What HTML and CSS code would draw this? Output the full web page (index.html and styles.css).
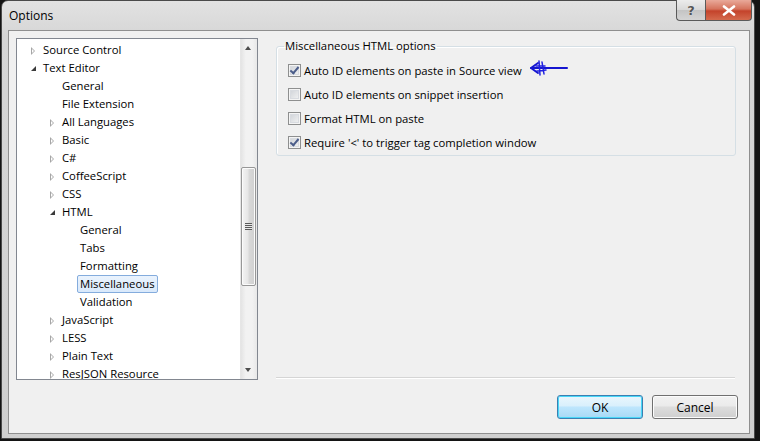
FILE: index.html
```html
<!DOCTYPE html>
<html>
<head>
<meta charset="utf-8">
<title>Options</title>
<link rel="stylesheet" href="styles.css">
</head>
<body>
<div class="window">
  <div class="titlebar">
    <span class="title">Options</span>
    <div class="caption-buttons">
      <div class="cap-btn help">?</div>
      <div class="cap-btn close">
        <svg width="14" height="11" viewBox="0 0 14 11"><path d="M2 1.5 L12 9.5 M12 1.5 L2 9.5" stroke="#fff" stroke-width="2.6" stroke-linecap="round"/></svg>
      </div>
    </div>
  </div>
  <div class="client">
    <div class="main">
      <div class="tree">
        <div class="tree-items">
          <div class="row lvl0"><span class="exp collapsed"></span><span class="label">Source Control</span></div>
          <div class="row lvl0"><span class="exp expanded"></span><span class="label">Text Editor</span></div>
          <div class="row lvl1"><span class="exp"></span><span class="label">General</span></div>
          <div class="row lvl1"><span class="exp"></span><span class="label">File Extension</span></div>
          <div class="row lvl1"><span class="exp collapsed"></span><span class="label">All Languages</span></div>
          <div class="row lvl1"><span class="exp collapsed"></span><span class="label">Basic</span></div>
          <div class="row lvl1"><span class="exp collapsed"></span><span class="label">C#</span></div>
          <div class="row lvl1"><span class="exp collapsed"></span><span class="label">CoffeeScript</span></div>
          <div class="row lvl1"><span class="exp collapsed"></span><span class="label">CSS</span></div>
          <div class="row lvl1"><span class="exp expanded"></span><span class="label">HTML</span></div>
          <div class="row lvl2"><span class="exp"></span><span class="label">General</span></div>
          <div class="row lvl2"><span class="exp"></span><span class="label">Tabs</span></div>
          <div class="row lvl2"><span class="exp"></span><span class="label">Formatting</span></div>
          <div class="row lvl2"><span class="exp"></span><span class="label selected">Miscellaneous</span></div>
          <div class="row lvl2"><span class="exp"></span><span class="label">Validation</span></div>
          <div class="row lvl1"><span class="exp collapsed"></span><span class="label">JavaScript</span></div>
          <div class="row lvl1"><span class="exp collapsed"></span><span class="label">LESS</span></div>
          <div class="row lvl1"><span class="exp collapsed"></span><span class="label">Plain Text</span></div>
          <div class="row lvl1"><span class="exp collapsed"></span><span class="label">ResJSON Resource</span></div>
        </div>
        <div class="vscroll">
          <div class="sb-arrow up"></div>
          <div class="sb-track">
            <div class="sb-thumb"><span class="grip"></span></div>
          </div>
          <div class="sb-arrow down"></div>
        </div>
      </div>
      <div class="panel">
        <fieldset class="group">
          <legend>Miscellaneous HTML options</legend>
          <div class="opt"><span class="cb checked"></span><span>Auto ID elements on paste in Source view</span></div>
          <div class="opt"><span class="cb"></span><span>Auto ID elements on snippet insertion</span></div>
          <div class="opt"><span class="cb"></span><span>Format HTML on paste</span></div>
          <div class="opt"><span class="cb checked"></span><span>Require '&lt;' to trigger tag completion window</span></div>
        </fieldset>
        <div class="separator"></div>
      </div>
    </div>
    <div class="buttons">
      <button class="btn default">OK</button>
      <button class="btn">Cancel</button>
    </div>
  </div>
  <svg class="annotation" width="44" height="20" viewBox="0 0 44 20">
    <path d="M3 10 H39" stroke="#1515d0" stroke-width="2" fill="none" stroke-linecap="round"/>
    <path d="M10 5 L3 10 L10 15" stroke="#1515d0" stroke-width="2" fill="none" stroke-linecap="round" stroke-linejoin="round"/>
    <path d="M11 3 L12 17 M14 4 L16 16 M8 8 L17 8 M9 13 L18 12" stroke="#2020e0" stroke-width="1.5" fill="none" stroke-linecap="round"/>
  </svg>
</div>
</body>
</html>
```

FILE: styles.css
```css
* { box-sizing: border-box; }
html, body { margin: 0; padding: 0; }
body {
  width: 760px;
  height: 441px;
  background: #141414;
  font-family: "Segoe UI", "Open Sans", "Noto Sans", sans-serif;
  font-size: 11.3px;
  color: #000;
  overflow: hidden;
}
.window {
  position: relative;
  width: 754px;
  height: 439px;
  margin-left: 1px;
  border: 1px solid #4a4a4a;
  border-radius: 7px 7px 0 0;
  background: linear-gradient(180deg, #e2e2e2 0%, #d6d6d6 8%, #cfcfcf 100%);
  display: flex;
  flex-direction: column;
  padding: 0 4px 4px 6px;
}
.titlebar {
  height: 29px;
  display: flex;
  align-items: flex-start;
  justify-content: space-between;
  flex: none;
}
.title {
  font-size: 12px;
  margin: 7px 0 0 1px;
  line-height: 16px;
}
.caption-buttons {
  display: flex;
  margin-top: -1px;
  margin-right: -2px;
}
.cap-btn {
  height: 21px;
  border: 1px solid #5a5a5a;
  border-top: none;
  display: flex;
  align-items: center;
  justify-content: center;
}
.help {
  width: 29px;
  border-radius: 0 0 0 4px;
  border-right: none;
  background: linear-gradient(180deg, #ececec 0%, #d8d8d8 50%, #c4c4c4 51%, #d4d4d4 100%);
  color: #555;
  font-family: "DejaVu Sans", sans-serif;
  font-weight: bold;
  font-size: 13px;
  text-shadow: 0 0 1px #fff;
}
.close {
  width: 47px;
  border-radius: 0 0 4px 0;
  background: linear-gradient(180deg, #e9a99a 0%, #d5735d 45%, #c4432b 55%, #d46a4d 100%);
}
.client {
  flex: 1;
  background: #f0f0f0;
  border: 1px solid #8f8f8f;
  display: flex;
  flex-direction: column;
  padding: 7px 11px 14px 7px;
}
.main {
  display: flex;
  gap: 18px;
  height: 342px;
  flex: none;
}
.tree {
  width: 242px;
  flex: none;
  height: 342px;
  border: 1px solid #828790;
  background: #fff;
  display: flex;
  overflow: hidden;
}
.tree-items {
  flex: 1;
  padding-top: 2px;
  overflow: hidden;
}
.row {
  height: 18px;
  display: flex;
  align-items: center;
  white-space: nowrap;
}
.lvl0 { padding-left: 10px; }
.lvl1 { padding-left: 29px; }
.lvl2 { padding-left: 48px; }
.exp {
  width: 15px;
  height: 18px;
  flex: none;
  position: relative;
}
.exp.collapsed::before {
  content: "";
  position: absolute;
  left: 4px;
  top: 6px;
  width: 0;
  height: 0;
  border-style: solid;
  border-width: 4px 0 4px 4px;
  border-color: transparent transparent transparent #a6a6a6;
}
.exp.collapsed::after {
  content: "";
  position: absolute;
  left: 5px;
  top: 8px;
  width: 0;
  height: 0;
  border-style: solid;
  border-width: 2px 0 2px 2px;
  border-color: transparent transparent transparent #fff;
}
.exp.expanded::before {
  content: "";
  position: absolute;
  left: 4px;
  top: 7px;
  width: 0;
  height: 0;
  border-style: solid;
  border-width: 0 0 5px 5px;
  border-color: transparent transparent #3a3a3a transparent;
}
.label {
  line-height: 16px;
  padding: 0 2px 0 0;
  border: 1px solid transparent;
}
.lvl2 .label { margin-left: -3px; padding-left: 2px; }
.label.selected {
  background: linear-gradient(180deg, #eaf3fd 0%, #d9e9fb 100%);
  border-color: #84acdd;
  border-radius: 2px;
}
.vscroll {
  width: 17px;
  flex: none;
  background: linear-gradient(90deg, #e4e4e4 0%, #f2f2f2 30%, #f2f2f2 70%, #e8e8e8 100%);
  border-left: 1px solid #e6e6e6;
  display: flex;
  flex-direction: column;
}
.sb-arrow {
  height: 17px;
  flex: none;
  position: relative;
}
.sb-arrow.up::before, .sb-arrow.down::before {
  content: "";
  position: absolute;
  left: 4px;
  width: 0;
  height: 0;
  border-style: solid;
}
.sb-arrow.up::before {
  top: 7px;
  border-width: 0 3.5px 4px 3.5px;
  border-color: transparent transparent #4d4d4d transparent;
}
.sb-arrow.down::before {
  top: 6px;
  border-width: 4px 3.5px 0 3.5px;
  border-color: #4d4d4d transparent transparent transparent;
}
.sb-track {
  flex: 1;
  padding: 111px 0 0 0;
}
.sb-thumb {
  height: 119px;
  margin: 0 1px 0 0;
  border: 1px solid #979797;
  border-radius: 2px;
  background: linear-gradient(90deg, #f4f4f4 0%, #e6e6e6 45%, #d8d8d8 55%, #d0d0d0 100%);
  box-shadow: inset 0 0 0 1px #fbfbfb;
  display: flex;
  align-items: center;
  justify-content: center;
}
.grip {
  width: 7px;
  height: 7px;
  background: repeating-linear-gradient(180deg, #5a5a5a 0, #5a5a5a 1px, #e8e8e8 1px, #e8e8e8 2px);
}
.panel {
  width: 460px;
  flex: none;
  display: flex;
  flex-direction: column;
  align-items: flex-start;
}
.group {
  margin: 0;
  padding: 4px 0 1px 7px;
  border: 1px solid #d5dfe5;
  border-radius: 3px;
  box-shadow: inset 1px 1px 0 #fff;
  min-width: 0;
  width: 460px;
  flex: none;
}
.group legend {
  padding: 0 1px;
  line-height: 16px;
}
.opt {
  height: 24px;
  display: flex;
  align-items: center;
  margin-left: 4px;
  gap: 3px;
  white-space: nowrap;
}
.cb {
  width: 13px;
  height: 13px;
  flex: none;
  border: 1px solid #8e8f8f;
  background: linear-gradient(135deg, #cbcfd5 0%, #f6f6f6 100%);
  box-shadow: inset 0 0 0 1px #f4f4f4, inset 0 0 0 2px #d8dbe0;
  position: relative;
}
.cb.checked::after {
  content: "";
  position: absolute;
  left: 3px;
  top: 0px;
  width: 3px;
  height: 7px;
  border-right: 2px solid #4b5d8a;
  border-bottom: 2px solid #4b5d8a;
  transform: rotate(40deg);
}
.separator {
  margin-top: auto;
  margin-bottom: 1px;
  width: 459px;
  height: 2px;
  background: linear-gradient(180deg, #d5d5d5 0, #d5d5d5 1px, #ffffff 1px, #ffffff 2px);
}
.buttons {
  margin-top: auto;
  display: flex;
  justify-content: flex-end;
  gap: 9px;
}
.btn {
  width: 86px;
  height: 24px;
  font-family: inherit;
  font-size: 12px;
  color: #000;
  border: 1px solid #707070;
  border-radius: 3px;
  background: linear-gradient(180deg, #f2f2f2 0%, #ebebeb 45%, #dddddd 50%, #cfcfcf 100%);
  box-shadow: inset 0 0 0 1px #fcfcfc;
  padding: 0;
}
.btn.default {
  border-color: #3c7fb1;
  background: linear-gradient(180deg, #eaf6fd 0%, #d9f0fc 45%, #bee6fd 50%, #a7d9f5 100%);
  box-shadow: inset 0 0 0 1px #48d7f8;
}
.annotation {
  position: absolute;
  left: 526px;
  top: 57px;
}
```
